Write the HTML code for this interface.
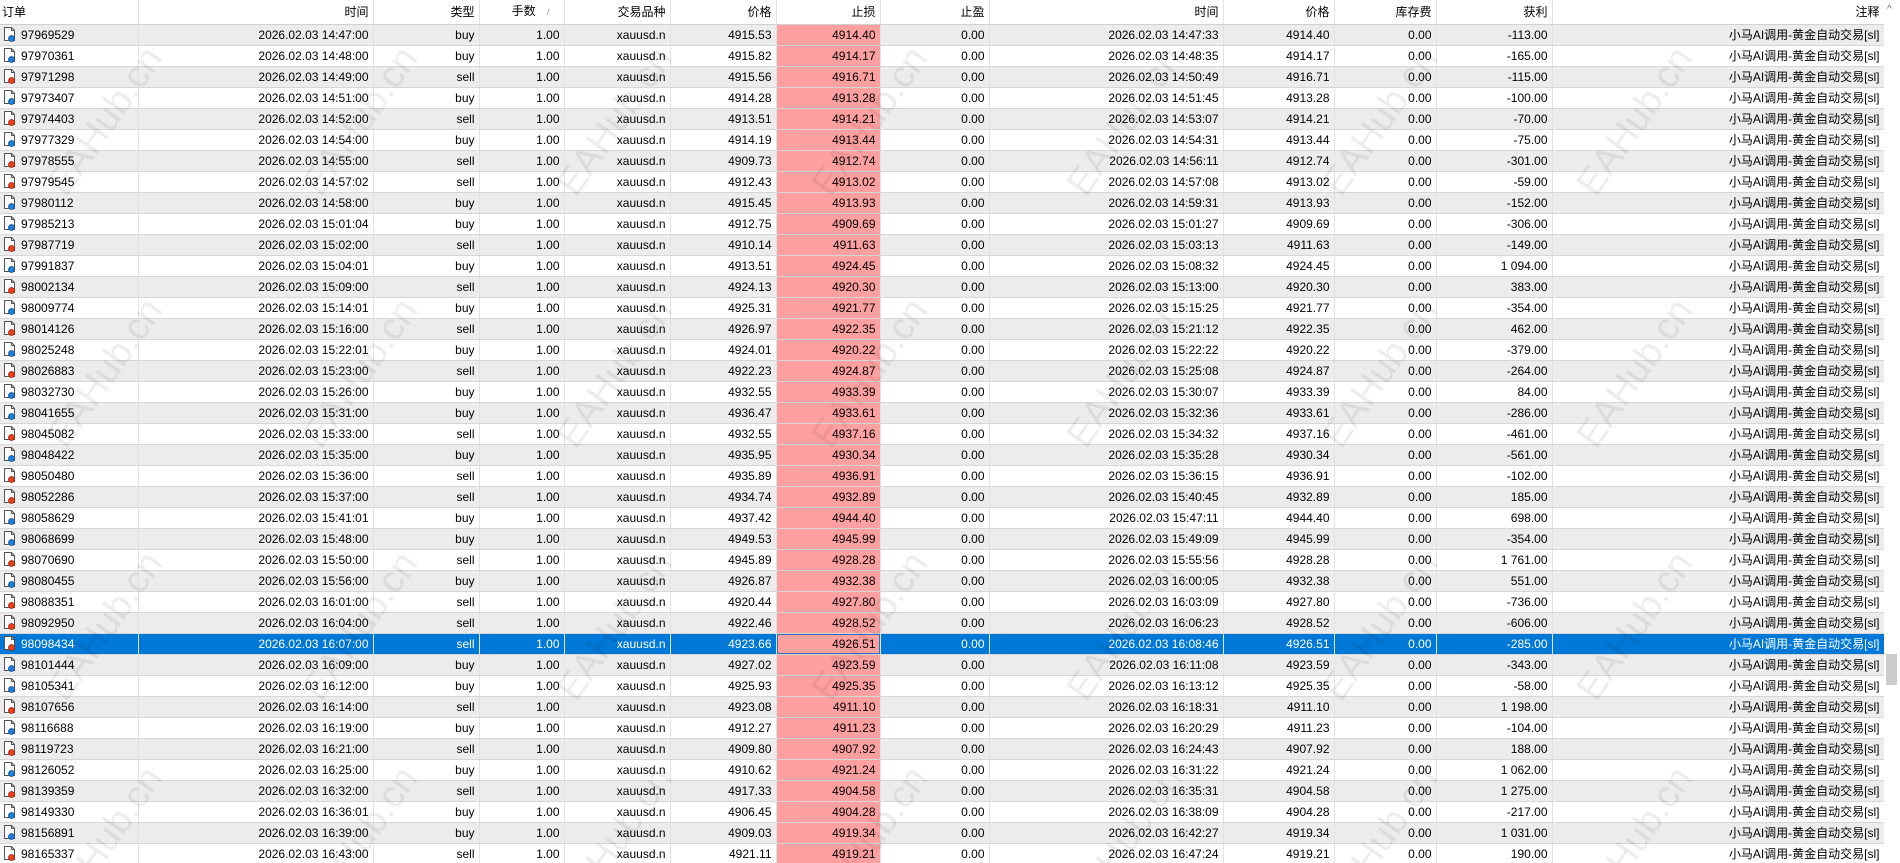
<!DOCTYPE html>
<html><head><meta charset="utf-8">
<style>
html,body{margin:0;padding:0;background:#fff;width:1900px;height:863px;overflow:hidden;position:relative}
body{font-family:"Liberation Sans","Noto Sans CJK SC",sans-serif;font-size:12px;color:#000}
.wrap{position:absolute;left:0;top:0;width:1884px;height:863px;overflow:hidden}
table{border-collapse:collapse;table-layout:fixed;width:1884px}
td,th{padding:0 4px 0 0;text-align:right;white-space:nowrap;overflow:hidden;border-right:1px solid #e2e2e2;box-sizing:border-box}
th{height:24px;line-height:23px;font-weight:normal;border-bottom:1px solid #d0d0d0;background:#fff}
td{height:21px;line-height:20px;border-bottom:1px solid #d6d6d6}
tr.g td{background:#ececec}
tr td.s,tr.g td.s{background:#ffa0a0}
th.l,td.l{text-align:left;padding-left:2px}
td.l svg{vertical-align:-3px;margin-right:3px}
tr.sel td{background:#0078d7;color:#fff}
tr.sel td.s{background:#ffa0a0;color:#000;box-shadow:inset 0 0 0 1px #2a6fb0}
.sb{position:absolute;left:1884px;top:0;width:16px;height:863px;background:#fff}
.sb .th{position:absolute;left:2px;top:654px;width:11px;height:31px;background:#cdcdcd}
.sb .ar{position:absolute;left:3px;top:4px;font-size:10px;color:#606060}
.wml{position:absolute;left:0;top:0;width:1900px;height:863px;overflow:hidden;pointer-events:none}
.wm{position:absolute;font-size:38px;color:rgba(0,0,0,0.07);transform:rotate(-55deg);white-space:nowrap;font-family:"Liberation Sans",sans-serif}
</style></head><body>
<svg width="0" height="0" style="position:absolute">
<symbol id="ib" viewBox="0 0 16 16"><path d="M2.5 1.5h7l3 3v10h-10z" fill="#fff" stroke="#555"/><path d="M9.5 1.5v3h3" fill="none" stroke="#555"/><circle cx="9.5" cy="12.5" r="3" fill="#1e7fd8" stroke="#0b4f9a" stroke-width="0.8"/></symbol>
<symbol id="ir" viewBox="0 0 16 16"><path d="M2.5 1.5h7l3 3v10h-10z" fill="#fff" stroke="#555"/><path d="M9.5 1.5v3h3" fill="none" stroke="#555"/><circle cx="9.5" cy="12.5" r="3" fill="#e8401c" stroke="#a02000" stroke-width="0.8"/></symbol>
</svg>
<div class="wrap">
<table>
<colgroup><col style="width:138px"><col style="width:235px"><col style="width:106px"><col style="width:85px"><col style="width:106px"><col style="width:106px"><col style="width:104px"><col style="width:109px"><col style="width:234px"><col style="width:111px"><col style="width:102px"><col style="width:116px"><col style="width:332px"></colgroup>
<tr><th class="l">订单</th><th>时间</th><th>类型</th><th>手数 <span style="color:#999;font-size:9px;padding:0 10px 0 8px">/</span></th><th>交易品种</th><th>价格</th><th>止损</th><th>止盈</th><th>时间</th><th>价格</th><th>库存费</th><th>获利</th><th>注释</th></tr>
<tr class="g"><td class="l"><svg width="16" height="16"><use href="#ib"/></svg>97969529</td><td>2026.02.03 14:47:00</td><td>buy</td><td>1.00</td><td>xauusd.n</td><td>4915.53</td><td class="s">4914.40</td><td>0.00</td><td>2026.02.03 14:47:33</td><td>4914.40</td><td>0.00</td><td>-113.00</td><td>小马AI调用-黄金自动交易[sl]</td></tr>
<tr><td class="l"><svg width="16" height="16"><use href="#ib"/></svg>97970361</td><td>2026.02.03 14:48:00</td><td>buy</td><td>1.00</td><td>xauusd.n</td><td>4915.82</td><td class="s">4914.17</td><td>0.00</td><td>2026.02.03 14:48:35</td><td>4914.17</td><td>0.00</td><td>-165.00</td><td>小马AI调用-黄金自动交易[sl]</td></tr>
<tr class="g"><td class="l"><svg width="16" height="16"><use href="#ir"/></svg>97971298</td><td>2026.02.03 14:49:00</td><td>sell</td><td>1.00</td><td>xauusd.n</td><td>4915.56</td><td class="s">4916.71</td><td>0.00</td><td>2026.02.03 14:50:49</td><td>4916.71</td><td>0.00</td><td>-115.00</td><td>小马AI调用-黄金自动交易[sl]</td></tr>
<tr><td class="l"><svg width="16" height="16"><use href="#ib"/></svg>97973407</td><td>2026.02.03 14:51:00</td><td>buy</td><td>1.00</td><td>xauusd.n</td><td>4914.28</td><td class="s">4913.28</td><td>0.00</td><td>2026.02.03 14:51:45</td><td>4913.28</td><td>0.00</td><td>-100.00</td><td>小马AI调用-黄金自动交易[sl]</td></tr>
<tr class="g"><td class="l"><svg width="16" height="16"><use href="#ir"/></svg>97974403</td><td>2026.02.03 14:52:00</td><td>sell</td><td>1.00</td><td>xauusd.n</td><td>4913.51</td><td class="s">4914.21</td><td>0.00</td><td>2026.02.03 14:53:07</td><td>4914.21</td><td>0.00</td><td>-70.00</td><td>小马AI调用-黄金自动交易[sl]</td></tr>
<tr><td class="l"><svg width="16" height="16"><use href="#ib"/></svg>97977329</td><td>2026.02.03 14:54:00</td><td>buy</td><td>1.00</td><td>xauusd.n</td><td>4914.19</td><td class="s">4913.44</td><td>0.00</td><td>2026.02.03 14:54:31</td><td>4913.44</td><td>0.00</td><td>-75.00</td><td>小马AI调用-黄金自动交易[sl]</td></tr>
<tr class="g"><td class="l"><svg width="16" height="16"><use href="#ir"/></svg>97978555</td><td>2026.02.03 14:55:00</td><td>sell</td><td>1.00</td><td>xauusd.n</td><td>4909.73</td><td class="s">4912.74</td><td>0.00</td><td>2026.02.03 14:56:11</td><td>4912.74</td><td>0.00</td><td>-301.00</td><td>小马AI调用-黄金自动交易[sl]</td></tr>
<tr><td class="l"><svg width="16" height="16"><use href="#ir"/></svg>97979545</td><td>2026.02.03 14:57:02</td><td>sell</td><td>1.00</td><td>xauusd.n</td><td>4912.43</td><td class="s">4913.02</td><td>0.00</td><td>2026.02.03 14:57:08</td><td>4913.02</td><td>0.00</td><td>-59.00</td><td>小马AI调用-黄金自动交易[sl]</td></tr>
<tr class="g"><td class="l"><svg width="16" height="16"><use href="#ib"/></svg>97980112</td><td>2026.02.03 14:58:00</td><td>buy</td><td>1.00</td><td>xauusd.n</td><td>4915.45</td><td class="s">4913.93</td><td>0.00</td><td>2026.02.03 14:59:31</td><td>4913.93</td><td>0.00</td><td>-152.00</td><td>小马AI调用-黄金自动交易[sl]</td></tr>
<tr><td class="l"><svg width="16" height="16"><use href="#ib"/></svg>97985213</td><td>2026.02.03 15:01:04</td><td>buy</td><td>1.00</td><td>xauusd.n</td><td>4912.75</td><td class="s">4909.69</td><td>0.00</td><td>2026.02.03 15:01:27</td><td>4909.69</td><td>0.00</td><td>-306.00</td><td>小马AI调用-黄金自动交易[sl]</td></tr>
<tr class="g"><td class="l"><svg width="16" height="16"><use href="#ir"/></svg>97987719</td><td>2026.02.03 15:02:00</td><td>sell</td><td>1.00</td><td>xauusd.n</td><td>4910.14</td><td class="s">4911.63</td><td>0.00</td><td>2026.02.03 15:03:13</td><td>4911.63</td><td>0.00</td><td>-149.00</td><td>小马AI调用-黄金自动交易[sl]</td></tr>
<tr><td class="l"><svg width="16" height="16"><use href="#ib"/></svg>97991837</td><td>2026.02.03 15:04:01</td><td>buy</td><td>1.00</td><td>xauusd.n</td><td>4913.51</td><td class="s">4924.45</td><td>0.00</td><td>2026.02.03 15:08:32</td><td>4924.45</td><td>0.00</td><td>1 094.00</td><td>小马AI调用-黄金自动交易[sl]</td></tr>
<tr class="g"><td class="l"><svg width="16" height="16"><use href="#ir"/></svg>98002134</td><td>2026.02.03 15:09:00</td><td>sell</td><td>1.00</td><td>xauusd.n</td><td>4924.13</td><td class="s">4920.30</td><td>0.00</td><td>2026.02.03 15:13:00</td><td>4920.30</td><td>0.00</td><td>383.00</td><td>小马AI调用-黄金自动交易[sl]</td></tr>
<tr><td class="l"><svg width="16" height="16"><use href="#ib"/></svg>98009774</td><td>2026.02.03 15:14:01</td><td>buy</td><td>1.00</td><td>xauusd.n</td><td>4925.31</td><td class="s">4921.77</td><td>0.00</td><td>2026.02.03 15:15:25</td><td>4921.77</td><td>0.00</td><td>-354.00</td><td>小马AI调用-黄金自动交易[sl]</td></tr>
<tr class="g"><td class="l"><svg width="16" height="16"><use href="#ir"/></svg>98014126</td><td>2026.02.03 15:16:00</td><td>sell</td><td>1.00</td><td>xauusd.n</td><td>4926.97</td><td class="s">4922.35</td><td>0.00</td><td>2026.02.03 15:21:12</td><td>4922.35</td><td>0.00</td><td>462.00</td><td>小马AI调用-黄金自动交易[sl]</td></tr>
<tr><td class="l"><svg width="16" height="16"><use href="#ib"/></svg>98025248</td><td>2026.02.03 15:22:01</td><td>buy</td><td>1.00</td><td>xauusd.n</td><td>4924.01</td><td class="s">4920.22</td><td>0.00</td><td>2026.02.03 15:22:22</td><td>4920.22</td><td>0.00</td><td>-379.00</td><td>小马AI调用-黄金自动交易[sl]</td></tr>
<tr class="g"><td class="l"><svg width="16" height="16"><use href="#ir"/></svg>98026883</td><td>2026.02.03 15:23:00</td><td>sell</td><td>1.00</td><td>xauusd.n</td><td>4922.23</td><td class="s">4924.87</td><td>0.00</td><td>2026.02.03 15:25:08</td><td>4924.87</td><td>0.00</td><td>-264.00</td><td>小马AI调用-黄金自动交易[sl]</td></tr>
<tr><td class="l"><svg width="16" height="16"><use href="#ib"/></svg>98032730</td><td>2026.02.03 15:26:00</td><td>buy</td><td>1.00</td><td>xauusd.n</td><td>4932.55</td><td class="s">4933.39</td><td>0.00</td><td>2026.02.03 15:30:07</td><td>4933.39</td><td>0.00</td><td>84.00</td><td>小马AI调用-黄金自动交易[sl]</td></tr>
<tr class="g"><td class="l"><svg width="16" height="16"><use href="#ib"/></svg>98041655</td><td>2026.02.03 15:31:00</td><td>buy</td><td>1.00</td><td>xauusd.n</td><td>4936.47</td><td class="s">4933.61</td><td>0.00</td><td>2026.02.03 15:32:36</td><td>4933.61</td><td>0.00</td><td>-286.00</td><td>小马AI调用-黄金自动交易[sl]</td></tr>
<tr><td class="l"><svg width="16" height="16"><use href="#ir"/></svg>98045082</td><td>2026.02.03 15:33:00</td><td>sell</td><td>1.00</td><td>xauusd.n</td><td>4932.55</td><td class="s">4937.16</td><td>0.00</td><td>2026.02.03 15:34:32</td><td>4937.16</td><td>0.00</td><td>-461.00</td><td>小马AI调用-黄金自动交易[sl]</td></tr>
<tr class="g"><td class="l"><svg width="16" height="16"><use href="#ib"/></svg>98048422</td><td>2026.02.03 15:35:00</td><td>buy</td><td>1.00</td><td>xauusd.n</td><td>4935.95</td><td class="s">4930.34</td><td>0.00</td><td>2026.02.03 15:35:28</td><td>4930.34</td><td>0.00</td><td>-561.00</td><td>小马AI调用-黄金自动交易[sl]</td></tr>
<tr><td class="l"><svg width="16" height="16"><use href="#ir"/></svg>98050480</td><td>2026.02.03 15:36:00</td><td>sell</td><td>1.00</td><td>xauusd.n</td><td>4935.89</td><td class="s">4936.91</td><td>0.00</td><td>2026.02.03 15:36:15</td><td>4936.91</td><td>0.00</td><td>-102.00</td><td>小马AI调用-黄金自动交易[sl]</td></tr>
<tr class="g"><td class="l"><svg width="16" height="16"><use href="#ir"/></svg>98052286</td><td>2026.02.03 15:37:00</td><td>sell</td><td>1.00</td><td>xauusd.n</td><td>4934.74</td><td class="s">4932.89</td><td>0.00</td><td>2026.02.03 15:40:45</td><td>4932.89</td><td>0.00</td><td>185.00</td><td>小马AI调用-黄金自动交易[sl]</td></tr>
<tr><td class="l"><svg width="16" height="16"><use href="#ib"/></svg>98058629</td><td>2026.02.03 15:41:01</td><td>buy</td><td>1.00</td><td>xauusd.n</td><td>4937.42</td><td class="s">4944.40</td><td>0.00</td><td>2026.02.03 15:47:11</td><td>4944.40</td><td>0.00</td><td>698.00</td><td>小马AI调用-黄金自动交易[sl]</td></tr>
<tr class="g"><td class="l"><svg width="16" height="16"><use href="#ib"/></svg>98068699</td><td>2026.02.03 15:48:00</td><td>buy</td><td>1.00</td><td>xauusd.n</td><td>4949.53</td><td class="s">4945.99</td><td>0.00</td><td>2026.02.03 15:49:09</td><td>4945.99</td><td>0.00</td><td>-354.00</td><td>小马AI调用-黄金自动交易[sl]</td></tr>
<tr><td class="l"><svg width="16" height="16"><use href="#ir"/></svg>98070690</td><td>2026.02.03 15:50:00</td><td>sell</td><td>1.00</td><td>xauusd.n</td><td>4945.89</td><td class="s">4928.28</td><td>0.00</td><td>2026.02.03 15:55:56</td><td>4928.28</td><td>0.00</td><td>1 761.00</td><td>小马AI调用-黄金自动交易[sl]</td></tr>
<tr class="g"><td class="l"><svg width="16" height="16"><use href="#ib"/></svg>98080455</td><td>2026.02.03 15:56:00</td><td>buy</td><td>1.00</td><td>xauusd.n</td><td>4926.87</td><td class="s">4932.38</td><td>0.00</td><td>2026.02.03 16:00:05</td><td>4932.38</td><td>0.00</td><td>551.00</td><td>小马AI调用-黄金自动交易[sl]</td></tr>
<tr><td class="l"><svg width="16" height="16"><use href="#ir"/></svg>98088351</td><td>2026.02.03 16:01:00</td><td>sell</td><td>1.00</td><td>xauusd.n</td><td>4920.44</td><td class="s">4927.80</td><td>0.00</td><td>2026.02.03 16:03:09</td><td>4927.80</td><td>0.00</td><td>-736.00</td><td>小马AI调用-黄金自动交易[sl]</td></tr>
<tr class="g"><td class="l"><svg width="16" height="16"><use href="#ir"/></svg>98092950</td><td>2026.02.03 16:04:00</td><td>sell</td><td>1.00</td><td>xauusd.n</td><td>4922.46</td><td class="s">4928.52</td><td>0.00</td><td>2026.02.03 16:06:23</td><td>4928.52</td><td>0.00</td><td>-606.00</td><td>小马AI调用-黄金自动交易[sl]</td></tr>
<tr class="sel"><td class="l"><svg width="16" height="16"><use href="#ir"/></svg>98098434</td><td>2026.02.03 16:07:00</td><td>sell</td><td>1.00</td><td>xauusd.n</td><td>4923.66</td><td class="s">4926.51</td><td>0.00</td><td>2026.02.03 16:08:46</td><td>4926.51</td><td>0.00</td><td>-285.00</td><td>小马AI调用-黄金自动交易[sl]</td></tr>
<tr class="g"><td class="l"><svg width="16" height="16"><use href="#ib"/></svg>98101444</td><td>2026.02.03 16:09:00</td><td>buy</td><td>1.00</td><td>xauusd.n</td><td>4927.02</td><td class="s">4923.59</td><td>0.00</td><td>2026.02.03 16:11:08</td><td>4923.59</td><td>0.00</td><td>-343.00</td><td>小马AI调用-黄金自动交易[sl]</td></tr>
<tr><td class="l"><svg width="16" height="16"><use href="#ib"/></svg>98105341</td><td>2026.02.03 16:12:00</td><td>buy</td><td>1.00</td><td>xauusd.n</td><td>4925.93</td><td class="s">4925.35</td><td>0.00</td><td>2026.02.03 16:13:12</td><td>4925.35</td><td>0.00</td><td>-58.00</td><td>小马AI调用-黄金自动交易[sl]</td></tr>
<tr class="g"><td class="l"><svg width="16" height="16"><use href="#ir"/></svg>98107656</td><td>2026.02.03 16:14:00</td><td>sell</td><td>1.00</td><td>xauusd.n</td><td>4923.08</td><td class="s">4911.10</td><td>0.00</td><td>2026.02.03 16:18:31</td><td>4911.10</td><td>0.00</td><td>1 198.00</td><td>小马AI调用-黄金自动交易[sl]</td></tr>
<tr><td class="l"><svg width="16" height="16"><use href="#ib"/></svg>98116688</td><td>2026.02.03 16:19:00</td><td>buy</td><td>1.00</td><td>xauusd.n</td><td>4912.27</td><td class="s">4911.23</td><td>0.00</td><td>2026.02.03 16:20:29</td><td>4911.23</td><td>0.00</td><td>-104.00</td><td>小马AI调用-黄金自动交易[sl]</td></tr>
<tr class="g"><td class="l"><svg width="16" height="16"><use href="#ir"/></svg>98119723</td><td>2026.02.03 16:21:00</td><td>sell</td><td>1.00</td><td>xauusd.n</td><td>4909.80</td><td class="s">4907.92</td><td>0.00</td><td>2026.02.03 16:24:43</td><td>4907.92</td><td>0.00</td><td>188.00</td><td>小马AI调用-黄金自动交易[sl]</td></tr>
<tr><td class="l"><svg width="16" height="16"><use href="#ib"/></svg>98126052</td><td>2026.02.03 16:25:00</td><td>buy</td><td>1.00</td><td>xauusd.n</td><td>4910.62</td><td class="s">4921.24</td><td>0.00</td><td>2026.02.03 16:31:22</td><td>4921.24</td><td>0.00</td><td>1 062.00</td><td>小马AI调用-黄金自动交易[sl]</td></tr>
<tr class="g"><td class="l"><svg width="16" height="16"><use href="#ir"/></svg>98139359</td><td>2026.02.03 16:32:00</td><td>sell</td><td>1.00</td><td>xauusd.n</td><td>4917.33</td><td class="s">4904.58</td><td>0.00</td><td>2026.02.03 16:35:31</td><td>4904.58</td><td>0.00</td><td>1 275.00</td><td>小马AI调用-黄金自动交易[sl]</td></tr>
<tr><td class="l"><svg width="16" height="16"><use href="#ib"/></svg>98149330</td><td>2026.02.03 16:36:01</td><td>buy</td><td>1.00</td><td>xauusd.n</td><td>4906.45</td><td class="s">4904.28</td><td>0.00</td><td>2026.02.03 16:38:09</td><td>4904.28</td><td>0.00</td><td>-217.00</td><td>小马AI调用-黄金自动交易[sl]</td></tr>
<tr class="g"><td class="l"><svg width="16" height="16"><use href="#ib"/></svg>98156891</td><td>2026.02.03 16:39:00</td><td>buy</td><td>1.00</td><td>xauusd.n</td><td>4909.03</td><td class="s">4919.34</td><td>0.00</td><td>2026.02.03 16:42:27</td><td>4919.34</td><td>0.00</td><td>1 031.00</td><td>小马AI调用-黄金自动交易[sl]</td></tr>
<tr><td class="l"><svg width="16" height="16"><use href="#ir"/></svg>98165337</td><td>2026.02.03 16:43:00</td><td>sell</td><td>1.00</td><td>xauusd.n</td><td>4921.11</td><td class="s">4919.21</td><td>0.00</td><td>2026.02.03 16:47:24</td><td>4919.21</td><td>0.00</td><td>190.00</td><td>小马AI调用-黄金自动交易[sl]</td></tr>
</table>
</div>
<div class="sb"><div class="ar">^</div><div class="th"></div></div>
<div class="wml">
<div class="wm" style="left:20px;top:100px">EAHub.cn</div>
<div class="wm" style="left:275px;top:100px">EAHub.cn</div>
<div class="wm" style="left:530px;top:100px">EAHub.cn</div>
<div class="wm" style="left:785px;top:100px">EAHub.cn</div>
<div class="wm" style="left:1040px;top:100px">EAHub.cn</div>
<div class="wm" style="left:1295px;top:100px">EAHub.cn</div>
<div class="wm" style="left:1550px;top:100px">EAHub.cn</div>
<div class="wm" style="left:20px;top:352px">EAHub.cn</div>
<div class="wm" style="left:275px;top:352px">EAHub.cn</div>
<div class="wm" style="left:530px;top:352px">EAHub.cn</div>
<div class="wm" style="left:785px;top:352px">EAHub.cn</div>
<div class="wm" style="left:1040px;top:352px">EAHub.cn</div>
<div class="wm" style="left:1295px;top:352px">EAHub.cn</div>
<div class="wm" style="left:1550px;top:352px">EAHub.cn</div>
<div class="wm" style="left:20px;top:605px">EAHub.cn</div>
<div class="wm" style="left:275px;top:605px">EAHub.cn</div>
<div class="wm" style="left:530px;top:605px">EAHub.cn</div>
<div class="wm" style="left:785px;top:605px">EAHub.cn</div>
<div class="wm" style="left:1040px;top:605px">EAHub.cn</div>
<div class="wm" style="left:1295px;top:605px">EAHub.cn</div>
<div class="wm" style="left:1550px;top:605px">EAHub.cn</div>
<div class="wm" style="left:20px;top:820px">EAHub.cn</div>
<div class="wm" style="left:275px;top:820px">EAHub.cn</div>
<div class="wm" style="left:530px;top:820px">EAHub.cn</div>
<div class="wm" style="left:785px;top:820px">EAHub.cn</div>
<div class="wm" style="left:1040px;top:820px">EAHub.cn</div>
<div class="wm" style="left:1295px;top:820px">EAHub.cn</div>
<div class="wm" style="left:1550px;top:820px">EAHub.cn</div>
</div>
</body></html>
